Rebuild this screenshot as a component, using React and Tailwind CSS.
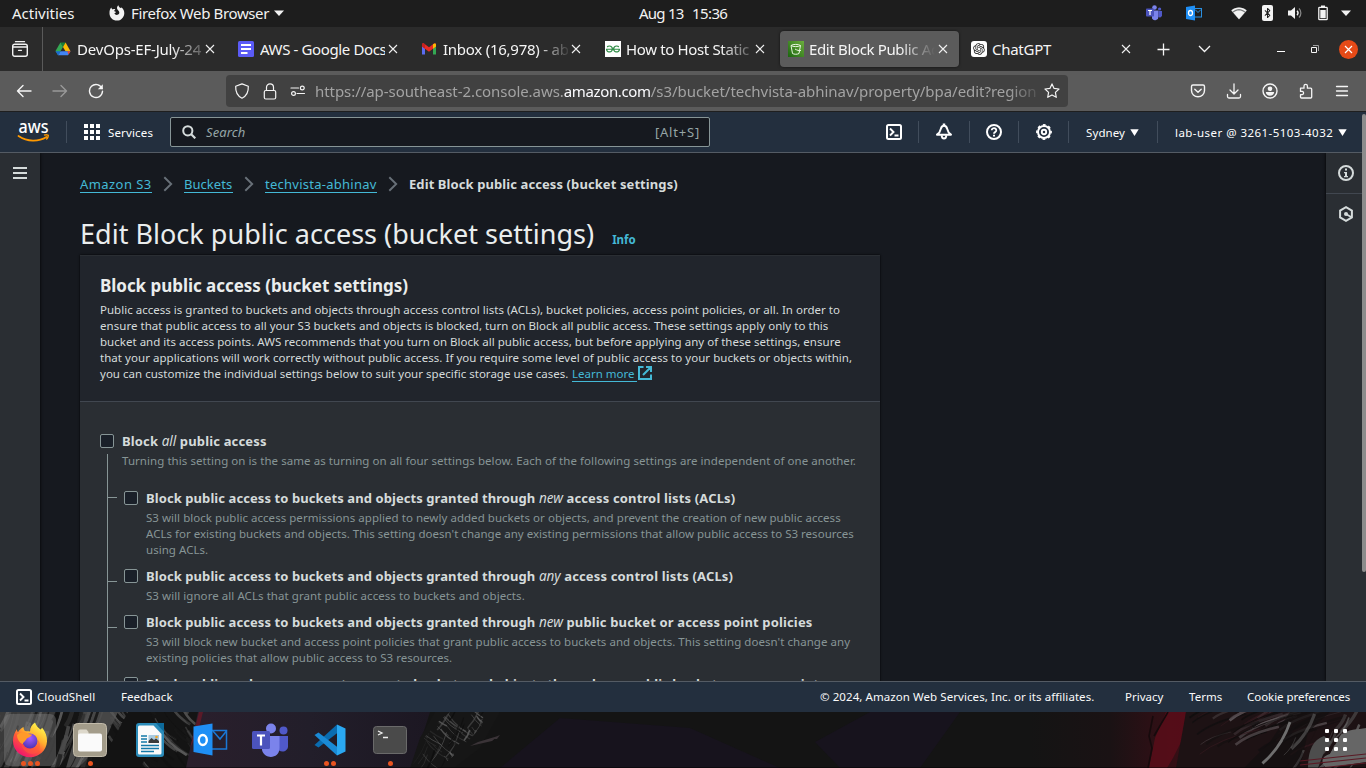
import React from "react";
import { Bluetooth } from "lucide-react";
import { RiOpenaiFill } from "react-icons/ri";
import { SiGeeksforgeeks } from "react-icons/si";

/* ---------- helpers ---------- */
const Svg = ({ w = 16, h = w, vb, className = "", children, ...rest }) => (
  <svg width={w} height={h} viewBox={vb || `0 0 ${w} ${h}`} fill="none" className={`block shrink-0 ${className}`} {...rest}>
    {children}
  </svg>
);
const Cell = ({ className = "", children }) => (
  <div className={`flex shrink-0 items-center justify-center ${className}`}>{children}</div>
);
const Caret = ({ className = "" }) => (
  <Svg w={10} h={6} className={className}>
    <path d="M0 0.500h10L5 6z" fill="#f2f2f2" />
  </Svg>
);

/* ---------- GNOME top bar ---------- */
function TopBar() {
  return (
    <div className="flex h-[27px] shrink-0 items-center bg-[#1d1d1d] pb-px text-[15px] leading-[26px] text-[#f2f2f2]">
      <span className="ml-3 w-[97px]">Activities</span>
      <Svg w={16} className="mr-[6px]">
        <path
          d="M2.200 2.600c.3.9.8 1.500 1.500 1.900C4.600 4 5.600 3.900 6.300 4.200 6 4.700 5.200 5.300 5.300 6c.1.5 1 .8 1.800.7-.2.9-1 1.300-1.700 1.600.6 1.600 2.400 2 3.700 1.300 1.400-.8 1.500-2.300.8-3.400-.7-1.100-1.900-1.700-1.900-3.200 0-1.200.6-2.100 1.400-2.800.1 1.200 1 2 2.100 2.800l1.100-.5c2 1.700 2.800 3.800 2.700 5.900-.3 4-3.300 7.200-7.400 7.200S.6 12.500.5 8.500C.4 6 1 4 2.200 2.600z"
          fill="#f2f2f2"
        />
      </Svg>
      <span className="w-[143px] tracking-[-0.37px]">Firefox Web Browser</span>
      <Caret />
      <div className="ml-[355px] flex w-[90px]">
        <span className="w-[53px] tracking-[-0.75px]">Aug 13</span>
        <span className="tracking-[-0.6px]">15:36</span>
      </div>
      <div className="ml-[417px] flex items-center">
        <Svg w={16}>
          <circle cx="8.500" cy="2.500" r="2.300" fill="#7b83eb" />
          <circle cx="13.600" cy="4" r="1.600" fill="#5059c9" />
          <path d="M6 5.500h6.500v6a3.500 3.500 0 0 1-6.500 2z" fill="#7b83eb" />
          <path d="M12.500 6H16v4.500a2.300 2.300 0 0 1-3.500 1.500z" fill="#5059c9" />
          <rect y="3.500" width="8" height="8" rx="0.800" fill="#4b53bc" />
          <path d="M2 5.500h4M4 5.500v4.500" stroke="#fff" strokeWidth="1.200" />
        </Svg>
        <Svg w={16} className="ml-6">
          <rect x="8" y="3.500" width="7.500" height="8.500" stroke="#2a8fe0" />
          <path d="M9 4.500l3 3 3-3" stroke="#2a8fe0" />
          <path d="M0 2l9-1.500v15L0 14z" fill="#1f8ff5" />
          <ellipse cx="4.500" cy="8" rx="2" ry="2.500" stroke="#fff" strokeWidth="1.300" />
        </Svg>
        <Svg w={16} h={14} className="ml-[29px]">
          <path d="M0 4.500C2.500 2.300 5 1.500 8 1.500s5.500.8 8 3L8 13.500z" fill="#77797a" />
          <path d="M0.500 4.500C3 2.300 5 1.500 8 1.500s5 .8 7.500 3l-1 1.200C12 3.800 10.300 3 8 3s-4 .8-6.500 2.700z" fill="#f2f2f2" />
          <path d="M2.200 6.500C4 5 6 4.400 8 4.400s4 .6 5.800 2.100L8 13.200z" fill="#f2f2f2" />
        </Svg>
        <Cell className="ml-[15px] h-[16px] w-[11px] rounded-[2px] bg-[#f2f2f2]">
          <Bluetooth size={12} color="#1d1d1d" strokeWidth={2.200} />
        </Cell>
        <Svg w={16} h={14} className="ml-[14px]">
          <path d="M1 4.500h3L8 1v12L4 9.500H1z" fill="#f2f2f2" />
          <path d="M10 4.800c1.200 1.200 1.200 3.200 0 4.400" stroke="#f2f2f2" strokeWidth="1.300" />
          <path d="M12 2.500c2.500 2.500 2.500 6.500 0 9" stroke="#8a8a8a" strokeWidth="1.200" />
        </Svg>
        <Svg w={10} h={16} className="ml-[15px]">
          <path d="M3 0.500h4v2H3z" fill="#f2f2f2" />
          <rect x="0.800" y="2.300" width="8.400" height="12.400" rx="0.800" stroke="#f2f2f2" strokeWidth="1.300" />
          <rect x="2.300" y="5" width="5.400" height="8.200" fill="#f2f2f2" />
        </Svg>
        <Caret className="ml-[13px]" />
      </div>
    </div>
  );
}

/* ---------- tab strip ---------- */
const X = () => (
  <Svg w={10}>
    <path d="M1 1l8 8M9 1l-8 8" stroke="#f0f0f0" strokeWidth="1.100" />
  </Svg>
);
const Drive = () => (
  <Svg w={16}>
    <path d="M5.400 1.500h5.200L8 6z" fill="#188038" />
    <path d="M5.400 1.500L8 6l-4.900 8.200L0.500 10z" fill="#34a853" />
    <path d="M10.600 1.500L8 6l2.500 4.200h5z" fill="#fbbc04" />
    <path d="M3 14.300L5.500 10.200h10L13 14.300z" fill="#4285f4" />
    <path d="M0.500 10.200h5L3 14.300z" fill="#1967d2" />
    <path d="M12.300 10.200h3.200L13.500 13.500z" fill="#ea4335" />
  </Svg>
);
const Docs = () => (
  <Svg w={16}>
    <rect width="16" height="16" rx="1.500" fill="#5b5bf6" />
    <path d="M3 4h10M3 8h10M3 12h6.500" stroke="#fff" strokeWidth="2" />
  </Svg>
);
const Gmail = () => (
  <Svg w={16}>
    <path d="M1 4v9.500h3V7z" fill="#5b6cf0" />
    <path d="M12 7v6.500h3V4z" fill="#34a853" />
    <path d="M1 3.500C1 2.400 2.500 2 3.300 2.700L8 6.300l4.700-3.600C13.500 2 15 2.400 15 3.500V5.500L8 10.800 1 5.500z" fill="#ea2b25" />
    <path d="M12 3.200C13.500 1.800 15 2.400 15 3.500v2L12 7.800z" fill="#fbbc04" />
    <path d="M1 3.500C1 2.400 2.500 2 4 3.200V7.800L1 5.500z" fill="#c5221f" />
  </Svg>
);
const Geeks = () => (
  <Cell className="h-4 w-4 bg-white">
    <SiGeeksforgeeks size={14} color="#2f8d46" />
  </Cell>
);
const Bucket = () => (
  <Svg w={16}>
    <defs>
      <linearGradient id="s3" x1="0" y1="16" x2="16" y2="0" gradientUnits="userSpaceOnUse">
        <stop stopColor="#1b660f" />
        <stop offset="1" stopColor="#6cae3e" />
      </linearGradient>
    </defs>
    <rect width="16" height="16" fill="url(#s3)" />
    <path d="M3 4.500l1.500 8c1.500 1 5 1 6.500 0l1.500-8M3 4.500C5 3 10.500 3 12.500 4.500 10.500 6 5 6 3 4.500zM7 8c2 1.200 4 2 6 1.500" stroke="#e8f5e0" strokeWidth="1" />
  </Svg>
);
const Gpt = () => (
  <Cell className="h-4 w-4 rounded-[3px] bg-white">
    <RiOpenaiFill size={14} color="#222" />
  </Cell>
);
const tabs = [
  { icon: <Drive />, title: "DevOps-EF-July-24", cls: "ml-[6px] w-[125px] tracking-[-0.2px] [mask-image:linear-gradient(to_right,#000_75%,rgba(0,0,0,0.25)_100%)]" },
  { icon: <Docs />, title: "AWS - Google Docs", cls: "ml-[6px] w-[125px] tracking-[-0.38px]" },
  { icon: <Gmail />, title: "Inbox (16,978) - abl", cls: "ml-[6px] w-[125px] tracking-[-0.25px] [mask-image:linear-gradient(to_right,#000_75%,rgba(0,0,0,0.1)_100%)]" },
  { icon: <Geeks />, title: "How to Host Static", cls: "ml-[5px] w-[126px] tracking-[-0.35px] [mask-image:linear-gradient(to_right,#000_75%,rgba(0,0,0,0.2)_100%)]", shift: true },
  { icon: <Bucket />, title: "Edit Block Public Ac", cls: "ml-[5px] w-[126px] tracking-[-0.35px] [mask-image:linear-gradient(to_right,#000_72%,transparent_100%)]", active: true },
  { icon: <Gpt />, title: "ChatGPT", cls: "ml-[5px] w-[126px] tracking-[-0.27px]" },
];
function TabStrip() {
  return (
    <div className="flex h-[44px] shrink-0 items-center bg-[#2b2b2b] text-[15px] text-[#f5f5f5]">
      <div className="flex h-full w-[43px] items-center border-r border-[#5a5a5a] pl-3">
        <Svg w={16} h={16}>
          <path d="M3.500 0.700h9" stroke="#f2f2f2" strokeWidth="1.300" strokeLinecap="round" />
          <path d="M0.700 5.200a2 2 0 0 1 2-2h10.600a2 2 0 0 1 2 2v8.100a2 2 0 0 1-2 2H2.700a2 2 0 0 1-2-2z" stroke="#f2f2f2" strokeWidth="1.400" />
          <path d="M1 6h14M6.500 9.300h3" stroke="#f2f2f2" strokeWidth="1.300" strokeLinecap="round" />
        </Svg>
      </div>
      <div className="ml-[4px] flex gap-1">
        {tabs.map((t) => (
          <div
            key={t.title}
            className={
              t.active
                ? "flex h-9 w-[179px] items-center rounded bg-[#5b5b5b] pl-2 shadow-[0_0_3px_rgba(0,0,0,0.6)]"
                : t.shift
                ? "ml-px flex h-9 w-[179px] items-center pl-2"
                : "flex h-9 w-[179px] items-center pl-2"
            }
          >
            {t.icon}
            <span className={`block overflow-hidden whitespace-nowrap leading-[22px] ${t.cls}`}>{t.title}</span>
            <div className="ml-[3px]">
              <X />
            </div>
          </div>
        ))}
      </div>
      <Cell className="ml-[12px] w-[18px]">
        <Svg w={13}>
          <path d="M6.500 0.500v12M0.500 6.500h12" stroke="#f5f5f5" strokeWidth="1.300" />
        </Svg>
      </Cell>
      <Cell className="ml-[23px] w-[18px]">
        <Svg w={13} h={8}>
          <path d="M1 1l5.500 5.500L12 1" stroke="#f5f5f5" strokeWidth="1.300" />
        </Svg>
      </Cell>
      <Cell className="ml-[63px] mt-1 w-[10px]">
        <div className="h-px w-2 bg-white" />
      </Cell>
      <Cell className="ml-[24px] w-[10px]">
        <Svg w={8}>
          <path d="M0.500 2.500h5v5h-5z" stroke="#f5f5f5" />
          <path d="M2 0.500h5.500V6" stroke="#a0a0a0" />
        </Svg>
      </Cell>
      <Cell className="ml-[19px] h-[19px] w-[19px] rounded-full bg-[#e64a17]">
        <Svg w={9}>
          <path d="M1 1l7 7M8 1l-7 7" stroke="#fff" strokeWidth="1.200" />
        </Svg>
      </Cell>
    </div>
  );
}

/* ---------- navigation toolbar ---------- */
function Toolbar() {
  const s = { stroke: "#f5f5f5", strokeWidth: 1.4, strokeLinecap: "round", strokeLinejoin: "round" };
  return (
    <div className="flex h-[41px] shrink-0 items-center border-b border-[#1f1f1f] bg-[#5b5b5b]">
      <Svg w={16} className="ml-4">
        <path d="M15 8H1.500M7 2.500L1.500 8 7 13.500" {...s} />
      </Svg>
      <Svg w={16} className="ml-5 opacity-40">
        <path d="M1 8h13.500M9 2.500L14.500 8 9 13.500" {...s} />
      </Svg>
      <Svg w={16} className="ml-5">
        <path d="M14 5.500A6.500 6.500 0 1 0 14.500 8.300" {...s} />
        <path d="M14.800 1.200v5h-5z" fill="#f5f5f5" />
      </Svg>
      <div className="ml-[122px] flex h-8 w-[842px] items-center rounded bg-[#414141] pl-2">
        <Svg w={16}>
          <path d="M8 0.900L14.300 3.300C14.600 9 12 13.300 8 15.200 4 13.300 1.400 9 1.700 3.300z" {...s} strokeWidth={1.2} />
        </Svg>
        <Svg w={14} h={17} className="ml-[13px]">
          <rect x="1.300" y="7.500" width="11.400" height="8.500" rx="1.500" {...s} strokeWidth={1.2} />
          <path d="M3.500 7.500V4.300a3.500 3.500 0 0 1 7 0v3.200" {...s} strokeWidth={1.2} />
        </Svg>
        <Svg w={16} className="ml-[13px]">
          <path d="M1 5h7.500M7 10.500h7.500" {...s} strokeWidth={1.2} />
          <circle cx="12.300" cy="5" r="1.900" {...s} strokeWidth={1.2} />
          <circle cx="3.500" cy="10.500" r="1.900" {...s} strokeWidth={1.2} />
        </Svg>
        <div className="ml-[9px] flex w-[722px] overflow-hidden whitespace-nowrap text-[15px] leading-[22px] text-[#a3a3a3] [mask-image:linear-gradient(to_right,#000_96%,rgba(0,0,0,0.2)_100%)]">
          <span className="tracking-[-0.06px]">https://ap-southeast-2.console.aws.</span>
          <span className="tracking-[-0.36px] text-[#fbfbfe]">amazon.com</span>
          <span className="tracking-[-0.04px]">/s3/bucket/techvista-abhinav/property/bpa/edit?region</span>
        </div>
        <Svg w={16} className="ml-[7px]">
          <path d="M8 0.900l2.100 4.500 4.900.6-3.600 3.400.9 4.900L8 11.900l-4.300 2.400.9-4.900L1 6l4.900-.6z" {...s} strokeWidth={1.2} />
        </Svg>
      </div>
      <div className="ml-[122px] flex items-center gap-5">
        <Svg w={16}>
          <path d="M1.500 3.500a1.500 1.500 0 0 1 1.500-1.500h10a1.500 1.500 0 0 1 1.500 1.500V7.500a6.500 6.300 0 0 1-13 0z" {...s} />
          <path d="M4.800 6.300L8 9.300l3.200-3" {...s} />
        </Svg>
        <Svg w={16}>
          <path d="M8 1v9.500M4 7l4 4 4-4M1.500 11.500v2a1.500 1.500 0 0 0 1.500 1.500h10a1.500 1.500 0 0 0 1.500-1.500v-2" {...s} strokeWidth={1.3} />
        </Svg>
        <Svg w={16}>
          <circle cx="8" cy="8" r="7" {...s} />
          <circle cx="8" cy="5.800" r="2.300" fill="#f5f5f5" />
          <path d="M3.800 9h8.400c-.3 2.500-2 3.700-4.200 3.700S4.100 11.500 3.800 9z" fill="#f5f5f5" />
        </Svg>
        <Svg w={16}>
          <path d="M2.500 5.200H6V3a1.700 1.700 0 0 1 3.400 0v2.200h3.300a1 1 0 0 1 1 1V14a1 1 0 0 1-1 1H3.500a1 1 0 0 1-1-1v-2.300h1.800a1.700 1.700 0 0 0 0-3.300H2.500z" {...s} strokeWidth={1.3} />
        </Svg>
        <Svg w={16}>
          <path d="M2.500 3.500h11M2.500 8h11M2.500 12.500h11" {...s} strokeWidth={1.3} />
        </Svg>
      </div>
    </div>
  );
}

/* ---------- AWS console header ---------- */
const Shell = () => (
  <Svg w={16}>
    <rect x="1" y="1" width="14" height="14" rx="1.500" stroke="#fff" strokeWidth="2" />
    <path d="M4 4.500L7.500 8 4 11.500M8.500 11.500h4" stroke="#fff" strokeWidth="1.900" />
  </Svg>
);
const Divider = ({ className = "" }) => <div className={`h-[22px] w-px shrink-0 bg-[#414d5c] ${className}`} />;
const Down = ({ className = "" }) => (
  <Svg w={9} h={7} className={className}>
    <path d="M0.300 0.300h8.400L4.500 6.900z" fill="#fff" />
  </Svg>
);
function AwsNav() {
  return (
    <div className="flex h-[41px] shrink-0 items-center border-b border-[#545b64] bg-[#232f3e] text-[11.5px] text-white">
      <Svg w={32} h={22} className="ml-[18px] overflow-visible">
        <text x="0.500" y="11.500" fontSize="18" fontWeight="500" textLength="30" lengthAdjust="spacingAndGlyphs" fill="#fff" fontFamily="'Noto Sans', sans-serif">
          aws
        </text>
        <path d="M0.500 15c9 6 20 6 28 1" stroke="#f90" strokeWidth="1.800" strokeLinecap="round" />
        <path d="M26 14.200c2-.6 4.500-.5 4.300.3 0 1.500-.8 3-2 4" stroke="#f90" strokeWidth="1.400" />
      </Svg>
      <Divider className="ml-4" />
      <div className="ml-[17px] grid shrink-0 grid-cols-3 gap-[2px]">
        {Array.from({ length: 9 }, (_, i) => (
          <div key={i} className="h-1 w-1 bg-white" />
        ))}
      </div>
      <span className="ml-[8px] w-[62px] pt-px tracking-[0.15px]">Services</span>
      <div className="flex h-[30px] w-[540px] shrink-0 items-center rounded-[2px] border border-[#879596] bg-[#16191f] pl-[11px] pr-[9px] text-[#95a5a6]">
        <Svg w={14}>
          <circle cx="5.800" cy="5.800" r="4.600" stroke="#d5dbdb" strokeWidth="2" />
          <path d="M9 9l4.300 4.300" stroke="#d5dbdb" strokeWidth="2.200" />
        </Svg>
        <span className="ml-[10px] flex-1 pt-px text-[13px] italic tracking-[0.1px]">Search</span>
        <span className="pt-px text-[13px] tracking-[0.8px]">[Alt+S]</span>
      </div>
      <div className="ml-[176px]">
        <Shell />
      </div>
      <Divider className="ml-4" />
      <Svg w={18} className="ml-[16px]">
        <path d="M9 2.800c1.700 0 2.500 1 3 2.600.6 2.800 1.200 4.400 4 6.300H2c2.800-1.900 3.400-3.500 4-6.300.5-1.600 1.300-2.600 3-2.600z" stroke="#fff" strokeWidth="2" strokeLinejoin="round" />
        <path d="M9 0.500v2" stroke="#fff" strokeWidth="2.500" />
        <path d="M6.700 12.200c0 1.700.8 3.300 2.300 3.300s2.300-1.600 2.300-3.300" stroke="#fff" strokeWidth="1.900" />
      </Svg>
      <Divider className="ml-4" />
      <Svg w={16} className="ml-4">
        <circle cx="8" cy="8" r="7" stroke="#fff" strokeWidth="2" />
        <path d="M5.700 6.300a2.300 2.100 0 1 1 3.600 1.700C8.500 8.500 8 8.700 8 9.700" stroke="#fff" strokeWidth="1.800" />
        <path d="M7 10.700h2v1.800H7z" fill="#fff" />
      </Svg>
      <Divider className="ml-4" />
      <Svg w={16} className="ml-[17px]">
        <circle cx="8" cy="8" r="6" stroke="#fff" strokeWidth="2" />
        <circle cx="8" cy="8" r="2.200" stroke="#fff" strokeWidth="1.900" />
        <circle cx="8" cy="8" r="7.100" stroke="#fff" strokeWidth="1.600" strokeDasharray="2.790 2.790" strokeDashoffset="1.400" />
      </Svg>
      <Divider className="ml-4" />
      <span className="ml-[17px] w-[40px] shrink-0 pt-px tracking-[0.1px]">Sydney</span>
      <Down className="ml-[4px]" />
      <Divider className="ml-[18px]" />
      <span className="ml-[17px] w-[160px] shrink-0 whitespace-nowrap pt-px tracking-[0.46px]">lab-user @ 3261-5103-4032</span>
      <Down className="ml-[3px]" />
    </div>
  );
}

/* ---------- page body ---------- */
const Sep = ({ className }) => (
  <Svg w={10} h={16} className={className}>
    <path d="M1.300 1.200L8.200 8l-6.900 6.800" stroke="#687078" strokeWidth="1.900" />
  </Svg>
);
const Link = ({ className = "", children }) => (
  <span className={`h-[18px] shrink-0 whitespace-nowrap border-b border-[#44b9d6] leading-[18px] text-[#44b9d6] ${className}`}>{children}</span>
);
const Line = ({ t, children }) => <div className={`h-4 whitespace-nowrap ${t}`}>{children}</div>;
const Box = () => <div className="h-[14px] w-[14px] shrink-0 rounded-[2px] border border-[#879596] bg-[#1a2029]" />;

function Setting({ label, children }) {
  return (
    <div className="flex">
      <div className="pt-1">
        <Box />
      </div>
      <div className="ml-2">
        <div className="h-[22px] whitespace-nowrap text-[13px] font-bold leading-[22px] tracking-[0.15px] text-[#d5dbdb]">{label}</div>
        <div className="mt-px text-[11.5px] leading-4 text-[#879596]">{children}</div>
      </div>
    </div>
  );
}
const Em = ({ children }) => <i className="text-[13.5px] font-normal tracking-[0px]">{children}</i>;
const Granted = () => <span className="tracking-[0.08px]">Block public access to buckets and objects granted through </span>;

function Content() {
  return (
    <div className="flex min-w-0 flex-1 flex-col overflow-hidden bg-[#16191f] pl-10">
      <div className="mt-[22px] flex h-[18px] shrink-0 items-start text-[13px] leading-[18px]">
        <Link className="w-[72px] tracking-[0.43px]">Amazon S3</Link>
        <Sep className="ml-[11px] mt-[1px]" />
        <Link className="ml-[11px] w-[49px] tracking-[0.05px]">Buckets</Link>
        <Sep className="ml-[11px] mt-[1px]" />
        <Link className="ml-[11px] w-[112px] tracking-[0.26px]">techvista-abhinav</Link>
        <Sep className="ml-[11px] mt-[1px]" />
        <span className="ml-[11px] font-bold tracking-[0.09px] text-[#d5dbdb]">Edit Block public access (bucket settings)</span>
      </div>
      <div className="mt-[23px] flex h-[37px] shrink-0 items-baseline">
        <h1 className="whitespace-nowrap text-[27px] leading-[36px] tracking-[0.02px] text-[#eaeded]">Edit Block public access (bucket settings)</h1>
        <span className="ml-[18px] text-[11.5px] font-bold leading-4 text-[#44b9d6]">Info</span>
      </div>
      <div className="mt-[2px] w-[800px] shrink-0 shadow-[0_0_2px_#000]">
        <div className="h-[147px] border-b border-t border-b-[#414750] border-t-[#2a2e33] bg-[#21252c] pl-5 pt-[17px]">
          <h2 className="h-[29px] whitespace-nowrap text-[17px] font-bold leading-[26px] tracking-[-0.04px] text-[#eaeded]">Block public access (bucket settings)</h2>
          <div className="text-[11.5px] leading-4 text-[#d5dbdb]">
            <Line t="tracking-[0.02px]">Public access is granted to buckets and objects through access control lists (ACLs), bucket policies, access point policies, or all. In order to</Line>
            <Line t="tracking-[0.045px]">ensure that public access to all your S3 buckets and objects is blocked, turn on Block all public access. These settings apply only to this</Line>
            <Line t="tracking-[0.025px]">bucket and its access points. AWS recommends that you turn on Block all public access, but before applying any of these settings, ensure</Line>
            <Line t="tracking-[0.045px]">that your applications will work correctly without public access. If you require some level of public access to your buckets or objects within,</Line>
            <div className="flex h-4 whitespace-nowrap">
              <span className="w-[472px] shrink-0 tracking-[0.02px]">you can customize the individual settings below to suit your specific storage use cases.</span>
              <span className="h-4 w-[65px] border-b border-[#44b9d6] tracking-[0px] text-[#44b9d6]">Learn more</span>
              <Svg w={14} className="ml-[1px]">
                <path d="M5.500 1H1v12h12V8.500M8 1h5v5M13 1L5 9" stroke="#44b9d6" strokeWidth="2" />
              </Svg>
            </div>
          </div>
        </div>
        <div className="bg-[#2a2e33] pl-5 pt-[28px]">
          <Setting label={<>Block <Em>all</Em> public access</>}>
            <Line t="tracking-[0.06px]">Turning this setting on is the same as turning on all four settings below. Each of the following settings are independent of one another.</Line>
          </Setting>
          <div className="flex pl-[7px]">
            <div className="-mt-[15px] w-[10px] shrink-0 border-l border-[#879596] pt-[43px]">
              <div className="h-px bg-[#879596]" />
              <div className="mt-[83px] h-px bg-[#879596]" />
              <div className="mt-[45px] h-px bg-[#879596]" />
            </div>
            <div className="ml-[7px] mt-[18px] flex flex-col gap-[7px]">
              <Setting label={<><Granted /><Em>new</Em> access control lists (ACLs)</>}>
                <Line t="tracking-[0.04px]">S3 will block public access permissions applied to newly added buckets or objects, and prevent the creation of new public access</Line>
                <Line t="tracking-[0.02px]">ACLs for existing buckets and objects. This setting doesn't change any existing permissions that allow public access to S3 resources</Line>
                <Line t="tracking-[0.04px]">using ACLs.</Line>
              </Setting>
              <Setting label={<><Granted /><Em>any</Em> access control lists (ACLs)</>}>
                <Line t="tracking-[0.06px]">S3 will ignore all ACLs that grant public access to buckets and objects.</Line>
              </Setting>
              <Setting label={<><Granted /><Em>new</Em> public bucket or access point policies</>}>
                <Line t="tracking-[0.045px]">S3 will block new bucket and access point policies that grant public access to buckets and objects. This setting doesn't change any</Line>
                <Line t="tracking-[0.04px]">existing policies that allow public access to S3 resources.</Line>
              </Setting>
              <Setting label={<span className="tracking-[0.06px]">Block public and cross-account access to buckets and objects through <Em>any</Em> public bucket or access point</span>} />
            </div>
          </div>
        </div>
      </div>
    </div>
  );
}

function Page() {
  return (
    <div className="flex min-h-0 flex-1 overflow-hidden">
      <div className="z-10 w-10 shrink-0 bg-[#2a2e33] pl-[13px] pt-[14px] shadow-[0_0_3px_#000]">
        <Svg w={14} h={12}>
          <path d="M0 1h14M0 6h14M0 11h14" stroke="#d5dbdb" strokeWidth="2" />
        </Svg>
      </div>
      <Content />
      <div className="z-10 flex w-10 shrink-0 flex-col items-center bg-[#2a2e33] shadow-[0_0_3px_#000]">
        <Cell className="h-[41px] w-full border-b border-[#414750]">
          <Svg w={16}>
            <circle cx="8" cy="8" r="7" stroke="#d5dbdb" strokeWidth="2" />
            <path d="M7 3.500h2v2H7zM6 7h3v4h1v1.300H6V11h1V8.300H6z" fill="#d5dbdb" />
          </Svg>
        </Cell>
        <Cell className="h-[40px]">
          <Svg w={16}>
            <path d="M8 1.200l5.900 3.400v6.800L8 14.800l-5.900-3.400V4.600z" stroke="#d5dbdb" strokeWidth="2" />
            <path d="M8 8l5 3" stroke="#d5dbdb" strokeWidth="1.800" />
            <circle cx="8" cy="8" r="2" fill="#d5dbdb" />
          </Svg>
        </Cell>
      </div>
    </div>
  );
}

function Footer() {
  return (
    <div className="flex h-[31px] shrink-0 items-center whitespace-nowrap border-t border-[#545b64] bg-[#232f3e] text-[11.5px] text-[#fafafa]">
      <div className="ml-4">
        <Shell />
      </div>
      <span className="ml-[5px] w-[84px] tracking-[0.1px]">CloudShell</span>
      <span className="flex-1 tracking-[0.05px]">Feedback</span>
      <span className="w-[305px] tracking-[0.07px]">© 2024, Amazon Web Services, Inc. or its affiliates.</span>
      <span className="w-[64px] tracking-[0px]">Privacy</span>
      <span className="w-[58px] tracking-[0.05px]">Terms</span>
      <span className="w-[119px] tracking-[-0.04px]">Cookie preferences</span>
    </div>
  );
}

/* ---------- dock ---------- */
function rng(seed) {
  let s = seed;
  return () => ((s = (s * 16807) % 2147483647) / 2147483647);
}
function strokes(seed, n, x0, x1, dx, dy, colors, maxW) {
  const r = rng(seed);
  return Array.from({ length: n }, (_, i) => {
    const x = x0 + r() * (x1 - x0);
    const y = r() * 56 - 12;
    const k = 0.4 + r();
    const w = 0.4 + r() * maxW;
    return (
      <path
        key={i}
        d={`M${x.toFixed(1)} ${y.toFixed(1)}q${(dx * k * 0.3).toFixed(1)} ${(dy * k * 0.6).toFixed(1)} ${(dx * k).toFixed(1)} ${(dy * k).toFixed(1)}`}
        stroke={colors[Math.floor(r() * colors.length)]}
        strokeWidth={w.toFixed(1)}
        opacity={(0.35 + r() * 0.6).toFixed(2)}
      />
    );
  });
}
function Wallpaper() {
  return (
    <svg className="absolute inset-0" width="1366" height="56" viewBox="0 0 1366 56" fill="none">
      <defs>
        <linearGradient id="wl" x1="190" x2="430" y1="0" y2="0" gradientUnits="userSpaceOnUse">
          <stop stopColor="#2a1f2c" />
          <stop offset="0.500" stopColor="#221e2a" />
          <stop offset="1" stopColor="#1c1722" />
        </linearGradient>
        <linearGradient id="wr" x1="1030" x2="1190" y1="0" y2="0" gradientUnits="userSpaceOnUse">
          <stop stopColor="#141414" />
          <stop offset="0.500" stopColor="#1a1214" />
          <stop offset="0.750" stopColor="#2b1015" />
          <stop offset="1" stopColor="#3a0e15" />
        </linearGradient>
        <clipPath id="lc">
          <path d="M0 0h198l-10 56H0z" />
        </clipPath>
        <clipPath id="mc">
          <path d="M412 56l8-26 20-22 10-8h34l-2 14-22 24-20 18z" />
        </clipPath>
      </defs>
      <rect width="1366" height="56" fill="#141414" />
      <path d="M500 56l60-50 130 10 90 40zM815 30l55-30h90l-40 56h-80z" fill="#17131d" />
      <g clipPath="url(#lc)">
        <path d="M0 0h56l-8 24-26 32H0z" fill="#3a3a3a" />
        <path d="M66 56L82 0h36l-14 30-26 26z" fill="#464646" />
        {strokes(7, 70, -10, 105, -14, 34, ["#5c5c5c", "#0f0f0f", "#6c6c6c", "#161616", "#4a4a4a"], 4)}
        {strokes(31, 50, 105, 190, 26, 26, ["#4c4c4c", "#101010", "#5a5a5a", "#1a1a1a"], 2.5)}
        <path d="M98 56l30-56h22l10 22-20 34z" fill="#131313" />
      </g>
      <path d="M198 0h232l-18 56H186z" fill="url(#wl)" />
      <path d="M199 0h4l-5 20-8 16z" fill="#5a1a28" />
      <path d="M435 0h65l-20 36-26 20h-44l10-30z" fill="#161616" />
      <g clipPath="url(#mc)">
        {strokes(11, 34, 412, 480, 22, 18, ["#555", "#3c3c3c", "#6a6a6a"], 1.2)}
        {strokes(17, 34, 420, 490, -14, 26, ["#0d0d0d", "#4a4a4a", "#5e5e5e"], 1.5)}
      </g>
      <path d="M478 30l20-6-6 5-22 5zM490 27l10-4-3 4z" fill="#3a3337" />
      <path d="M1030 0h160l-4 56H1030z" fill="url(#wr)" />
      <path d="M1166 0h20l-3 26-10 20-6 10h-18l6-30z" fill="#5c0d19" opacity="0.800" />
      <path d="M1153 4l-4 20 3 12-4 20M1168 0l-14 24" stroke="#160a0c" strokeWidth="1.600" />
      <path d="M1186 0h180v56h-190z" fill="#1d1214" />
      {strokes(23, 60, 1188, 1300, 48, -20, ["#4a4044", "#0f0d0d", "#5b5356", "#32191e", "#120f10"], 2.6)}
      <path d="M1290 0h40l-22 20-8 36h-56l26-26z" fill="#130f10" opacity="0.700" />
      {strokes(41, 24, 1290, 1366, -20, 30, ["#5e5e5e", "#141112", "#747474"], 3)}
      <path d="M1340 24c8-8 18-6 26-8v34l-40 6c-6-6-4-12 4-14z" fill="#666" />
      <path d="M1308 56c0-16 4-28 16-32l8 6-8 10-6 16z" fill="#4d4d4d" />
      <path d="M1300 49l66-7M1300 53l66-7M1320 56l46-5" stroke="#5a1a25" strokeWidth="1.200" />
      <rect y="55" width="1366" height="1" fill="#000" opacity="0.450" />
    </svg>
  );
}

const icons = [
  {
    dots: 3,
    active: true,
    svg: (
      <Svg w={36}>
        <defs>
          <linearGradient id="ff" x1="28" y1="4" x2="8" y2="33" gradientUnits="userSpaceOnUse">
            <stop stopColor="#fff14a" />
            <stop offset="0.350" stopColor="#ffb02e" />
            <stop offset="0.600" stopColor="#ff5a36" />
            <stop offset="1" stopColor="#f0136f" />
          </linearGradient>
          <radialGradient id="fp" cx="0.500" cy="0.300" r="0.700">
            <stop stopColor="#a45cff" />
            <stop offset="1" stopColor="#4b35b5" />
          </radialGradient>
        </defs>
        <path d="M23 0.500c1 3 3 5 5.500 7 1-.5 1.300-1.200 1.500-2 3.500 4 5.300 9 5 14C34.500 28.500 27 35.200 18 35.200S1 28.500 1 19c0-5 1.500-8.500 4-12 0 1.500.3 2.500 1 3.200C7.500 8 9 6 11.500 5c0 1.500.5 3 1.500 4 2 .3 3.500 0 5 .5 0-4 2-7 5-9z" fill="url(#ff)" />
        <circle cx="18" cy="19" r="7.500" fill="url(#fp)" />
        <path d="M5 13c4-3.500 8-3 10.500-1.500 1.500.7 3 .8 4.500 1-.5 2-2.500 3-5 3.700-1 2.500-3.300 3.300-4.500 6C7 20 5 17 5 13z" fill="#ff9a2a" />
        <path d="M9 20c1 5 5 7.500 9.500 7 5-.5 8-4.500 7.500-9 3 4 2.500 9.500-1 12.500C20 34 10 31 9 20z" fill="#ff5a3c" opacity="0.550" />
      </Svg>
    ),
  },
  {
    dots: 1,
    svg: (
      <Svg w={34}>
        <rect x="0.500" y="0.500" width="33" height="33" rx="4" fill="#a39c8a" stroke="#c2bbaa" />
        <path d="M5 8.500a2 2 0 0 1 2-2h6.500l2 2.500V14H5z" fill="#ddd8cb" />
        <rect x="5" y="10.500" width="24" height="18" rx="2" fill="#fafafa" />
      </Svg>
    ),
  },
  {
    dots: 0,
    svg: (
      <Svg w={28} h={34}>
        <rect width="28" height="34" rx="3" fill="#2b8cba" />
        <path d="M20 0h8v9z" fill="#0d6a9b" />
        <path d="M3.500 2.500h14l8 8.500v19a1.500 1.500 0 0 1-1.500 1.500H3.500A1.500 1.500 0 0 1 2 30V4a1.500 1.500 0 0 1 1.500-1.500z" fill="#fafafa" />
        <path d="M5 13h6M5 16h6M5 19h6M5 22.500h18M5 25.500h18M5 28.500h13" stroke="#1479a8" strokeWidth="1.500" />
        <rect x="12.500" y="12" width="10.500" height="8" fill="#a9cbe0" />
        <path d="M12.500 20v-2l3-3 2.500 2 2-1.500 3 2.500v2z" fill="#3b3b3b" />
        <circle cx="20.500" cy="14" r="1.300" fill="#f5a623" />
      </Svg>
    ),
  },
  {
    dots: 0,
    svg: (
      <Svg w={35} h={33}>
        <path d="M18 7.500h15.500v18.500H18" stroke="#1a78d6" strokeWidth="1.500" />
        <path d="M20 8l7 8 6.500-8" stroke="#1a78d6" strokeWidth="1.500" />
        <path d="M0.500 3.500L19.500 0.500v32L0.500 29z" fill="#1f8ff5" />
        <ellipse cx="9.800" cy="17" rx="4" ry="5" stroke="#fff" strokeWidth="2.400" />
      </Svg>
    ),
  },
  {
    dots: 0,
    svg: (
      <Svg w={36} h={34}>
        <circle cx="19" cy="5.500" r="5" fill="#7b83eb" />
        <circle cx="31.500" cy="7.500" r="4" fill="#5059c9" />
        <path d="M26 13h10v10.500c0 4-5 6.500-9 4z" fill="#5059c9" />
        <path d="M10 13h17.500v12c0 11-15 12-17.500 2z" fill="#7b83eb" />
        <rect y="8" width="18" height="18" rx="1.500" fill="#4b53bc" />
        <path d="M5 12.500h8M9 12.500v10" stroke="#fff" strokeWidth="2.200" />
      </Svg>
    ),
  },
  {
    dots: 2,
    svg: (
      <Svg w={32}>
        <path d="M23 0.500l8.500 4v23l-8.500 4z" fill="#2aa8f2" />
        <path d="M23 0.500v8.800L4.500 23.500 0.500 21z" fill="#0a6cb0" />
        <path d="M23 31.500v-8.800L4.500 8.500 0.500 11z" fill="#1a8ad6" />
      </Svg>
    ),
  },
  {
    dots: 1,
    svg: (
      <Svg w={34} h={28}>
        <rect x="0.500" y="0.500" width="33" height="27" rx="3" fill="#4a4a4a" stroke="#6a6a6a" />
        <path d="M5 5l4 2-4 2M10 11.500h5" stroke="#eee" strokeWidth="1.300" />
      </Svg>
    ),
  },
];

function Dock() {
  return (
    <div className="relative h-[56px] shrink-0 overflow-hidden">
      <Wallpaper />
      <div className="relative flex h-full items-center justify-between">
        <div className="flex gap-2 pl-1">
          {icons.map((it, i) => (
            <div
              key={i}
              className={
                it.active
                  ? "flex h-[52px] w-[52px] flex-col items-center rounded-md bg-[#8080806b]"
                  : "flex h-[52px] w-[52px] flex-col items-center"
              }
            >
              <Cell className="mt-[3px] h-[45px]">{it.svg}</Cell>
              <div className="-mt-px flex gap-[2px]">
                {Array.from({ length: it.dots }, (_, k) => (
                  <div key={k} className="h-[5px] w-[5px] rounded-full bg-[#e95420]" />
                ))}
              </div>
            </div>
          ))}
        </div>
        <div className="mr-[19px] grid grid-cols-3 gap-[5px]">
          {Array.from({ length: 9 }, (_, i) => (
            <div key={i} className="h-1 w-1 rounded-[1px] bg-white" />
          ))}
        </div>
      </div>
    </div>
  );
}

export default function App() {
  return (
    <div className="relative flex h-[768px] w-[1366px] flex-col overflow-hidden font-['Noto_Sans',sans-serif]">
      <TopBar />
      <TabStrip />
      <Toolbar />
      <AwsNav />
      <Page />
      <Footer />
      <Dock />
      <div className="absolute right-0 top-[114px] z-20 h-[458px] w-1 rounded bg-[#8c8c8c]" />
    </div>
  );
}
